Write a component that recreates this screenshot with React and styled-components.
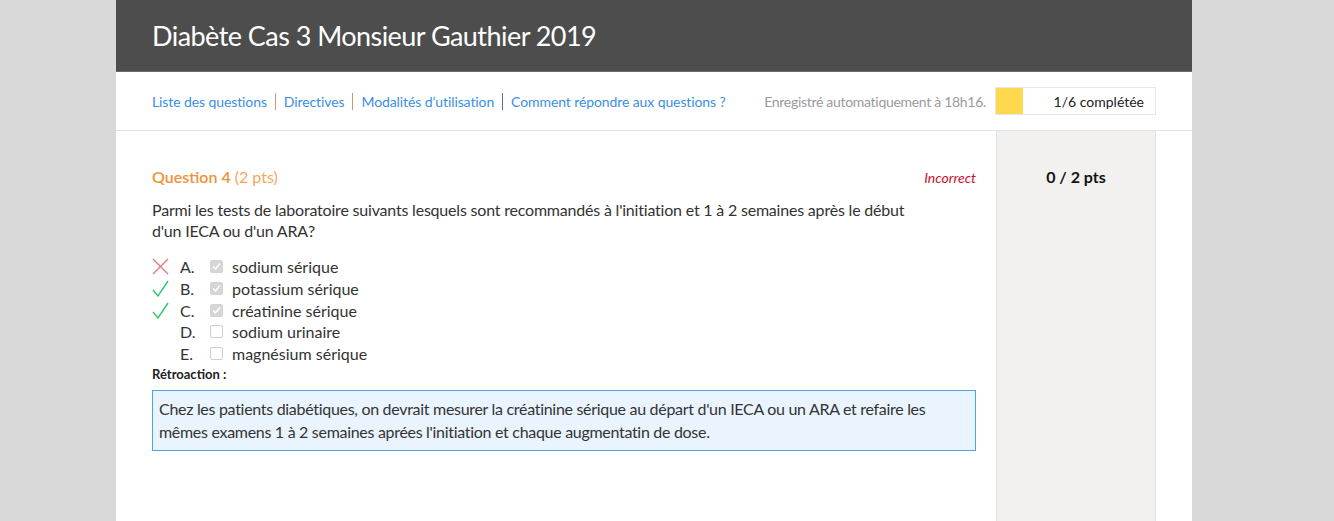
import React from 'react'
import styled, { createGlobalStyle } from 'styled-components'

const GlobalStyle = createGlobalStyle`
    html, body {
        margin:0;
        padding:0;
        background-color:#d9d9d9;
        font-family:'Lato', 'Open Sans', sans-serif;
    }
`

const Page = styled.div`
    width:1076px;
    margin-left:116px;
    min-height:521px;
    background-color:white;
    display:flex;
    flex-direction:column;
`

const Header = styled.div`
    background-color:#4d4d4d;
    height:72px;
    display:flex;
    align-items:center;
    padding:0 36px;
    box-sizing:border-box;
    border-bottom:1px solid #6a6a6a;
`

const Title = styled.h1`
    margin:0;
    color:white;
    font-weight:400;
    font-size:27px;
    letter-spacing:-0.55px;
`

const NavBar = styled.div`
    height:59px;
    display:flex;
    align-items:center;
    justify-content:space-between;
    padding:0 36px;
    border-bottom:1px solid #e3e3e3;
    box-sizing:border-box;
`

const Links = styled.div`
    display:flex;
    align-items:center;
`

const NavLink = styled.a`
    color:#3a8ee6;
    font-size:14px;
    letter-spacing:-0.1px;
    text-decoration:none;
    padding:0 8px;
    line-height:17px;
    border-left:${p => p.sep ? `1px solid ${p.sep}` : 'none'};
    &:first-child{
        padding-left:0;
    }
`

const Status = styled.div`
    display:flex;
    align-items:center;
    gap:9px;
`

const Saved = styled.span`
    color:#9a9a9a;
    font-size:14px;
    letter-spacing:-0.3px;
`

const Progress = styled.div`
    position:relative;
    width:161px;
    height:28px;
    border:1px solid #e6e6e6;
    box-sizing:border-box;
    display:flex;
    align-items:center;
    justify-content:flex-end;
    padding-right:11px;
    color:#222;
    font-size:14px;
`

const Fill = styled.div`
    position:absolute;
    left:0;
    top:0;
    bottom:0;
    background-color:#ffd84d;
`

const Label = styled.span`
    position:relative;
`

const Main = styled.div`
    flex:1;
    display:flex;
    padding:0 36px;
    gap:20px;
`

const Question = styled.div`
    width:824px;
    padding-top:36px;
`

const QHead = styled.div`
    display:flex;
    justify-content:space-between;
    align-items:baseline;
`

const QTitle = styled.div`
    color:#f0923a;
    font-size:16px;
    font-weight:600;
    span{
        font-weight:400;
        color:#f5a65c;
    }
`

const Verdict = styled.div`
    color:#c8102e;
    font-style:italic;
    font-size:14px;
`

const QText = styled.p`
    margin:13px 0 15px;
    width:760px;
    color:#333;
    font-size:16px;
    line-height:21px;
    letter-spacing:-0.2px;
`

const Options = styled.div`
    display:flex;
    flex-direction:column;
`

const Option = styled.div`
    display:flex;
    align-items:center;
    height:21.7px;
    font-size:16px;
    color:#333;
`

const Mark = styled.div`
    width:28px;
    display:flex;
    align-items:center;
`

const Letter = styled.span`
    width:30px;
`

const Box = styled.div`
    width:13px;
    height:13px;
    box-sizing:border-box;
    border-radius:2px;
    border:1px solid ${p => p.checked ? '#d4d4d4' : '#cfcfcf'};
    background-color:${p => p.checked ? '#d6d6d6' : 'white'};
    margin-right:9px;
    display:flex;
    align-items:center;
    justify-content:center;
`

const FeedbackTitle = styled.div`
    font-size:13px;
    font-weight:700;
    color:#222;
    margin-top:2px;
`

const Feedback = styled.div`
    margin-top:8px;
    border:1px solid #4ea2ee;
    background-color:#eaf4fe;
    padding:6px 6px 7px;
    font-size:16px;
    line-height:23px;
    letter-spacing:-0.3px;
    color:#333;
`

const Side = styled.div`
    width:160px;
    background-color:#f2f1f0;
    border-left:1px solid #e2e2e2;
    border-right:1px solid #e2e2e2;
    box-sizing:border-box;
    text-align:center;
    padding-top:36px;
    font-weight:700;
    font-size:16px;
    color:#111;
`

const Cross = () => (
    <svg width="17" height="17" viewBox="0 0 17 17">
        <path d="M1 1 L16 16 M16 1 L1 16" stroke="#e4707c" strokeWidth="1.2" fill="none" />
    </svg>
)

const Tick = () => (
    <svg width="17" height="17" viewBox="0 0 17 17">
        <path d="M1 10 L6 16 L16 1" stroke="#2fc76a" strokeWidth="1.4" fill="none" />
    </svg>
)

const BoxTick = () => (
    <svg width="9" height="9" viewBox="0 0 9 9">
        <path d="M1 4.5 L3.5 7 L8 1.5" stroke="white" strokeWidth="1.5" fill="none" />
    </svg>
)

const options = [
    { letter:'A.', label:'sodium sérique', checked:true, mark:'cross' },
    { letter:'B.', label:'potassium sérique', checked:true, mark:'tick' },
    { letter:'C.', label:'créatinine sérique', checked:true, mark:'tick' },
    { letter:'D.', label:'sodium urinaire', checked:false },
    { letter:'E.', label:'magnésium sérique', checked:false },
]

const App = () => {
    return (
        <Page>
            <GlobalStyle />
            <Header>
                <Title>Diabète Cas 3 Monsieur Gauthier 2019</Title>
            </Header>
            <NavBar>
                <Links>
                    <NavLink>Liste des questions</NavLink>
                    <NavLink sep="#c9967a">Directives</NavLink>
                    <NavLink sep="#c9967a">Modalités d’utilisation</NavLink>
                    <NavLink sep="#5a6b9a">Comment répondre aux questions ?</NavLink>
                </Links>
                <Status>
                    <Saved>Enregistré automatiquement à 18h16.</Saved>
                    <Progress>
                        <Fill style={{ width: `${100 / 6}%` }} />
                        <Label>1/6 complétée</Label>
                    </Progress>
                </Status>
            </NavBar>
            <Main>
                <Question>
                    <QHead>
                        <QTitle>Question 4 <span>(2 pts)</span></QTitle>
                        <Verdict>Incorrect</Verdict>
                    </QHead>
                    <QText>
                        Parmi les tests de laboratoire suivants lesquels sont recommandés à l'initiation et 1 à 2 semaines après le début d'un IECA ou d'un ARA?
                    </QText>
                    <Options>
                        {options.map(o => (
                            <Option key={o.letter}>
                                <Mark>
                                    {o.mark === 'cross' && <Cross />}
                                    {o.mark === 'tick' && <Tick />}
                                </Mark>
                                <Letter>{o.letter}</Letter>
                                <Box checked={o.checked}>{o.checked && <BoxTick />}</Box>
                                {o.label}
                            </Option>
                        ))}
                    </Options>
                    <FeedbackTitle>Rétroaction :</FeedbackTitle>
                    <Feedback>
                        Chez les patients diabétiques, on devrait mesurer la créatinine sérique au départ d'un IECA ou un ARA et refaire les mêmes examens 1 à 2 semaines aprées l'initiation et chaque augmentatin de dose.
                    </Feedback>
                </Question>
                <Side>0 / 2 pts</Side>
            </Main>
        </Page>
    )
}

export default App
